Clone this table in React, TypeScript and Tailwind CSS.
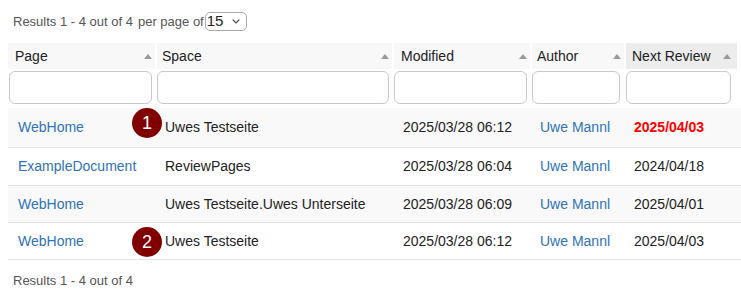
import { ReactNode } from "react";

const cols = [
  { key: "page", label: "Page", w: "w-[147px]", input: "w-[143px] ml-[1px]", pad: "pl-[10px]" },
  { key: "space", label: "Space", w: "w-[235px]", input: "w-[232px]", pad: "pl-[8px]" },
  { key: "modified", label: "Modified", w: "w-[136px]", input: "w-[133px]", pad: "pl-[9px]" },
  { key: "author", label: "Author", w: "w-[92px]", input: "w-[88px]", pad: "pl-[8px]" },
  { key: "review", label: "Next Review", w: "w-[111px]", input: "w-[105px]", pad: "pl-[8px]" },
];

type Row = {
  page: string;
  space: string;
  modified: string;
  author: string;
  review: string;
  overdue?: boolean;
  badge?: string;
  h: string;
  bg: string;
};

const rows: Row[] = [
  { page: "WebHome", space: "Uwes Testseite", modified: "2025/03/28 06:12", author: "Uwe Mannl", review: "2025/04/03", overdue: true, badge: "1", h: "h-[40px]", bg: "bg-[#f9f9f9]" },
  { page: "ExampleDocument", space: "ReviewPages", modified: "2025/03/28 06:04", author: "Uwe Mannl", review: "2024/04/18", h: "h-[38px]", bg: "bg-white" },
  { page: "WebHome", space: "Uwes Testseite.Uwes Unterseite", modified: "2025/03/28 06:09", author: "Uwe Mannl", review: "2025/04/01", h: "h-[37px]", bg: "bg-[#f9f9f9]" },
  { page: "WebHome", space: "Uwes Testseite", modified: "2025/03/28 06:12", author: "Uwe Mannl", review: "2025/04/03", badge: "2", h: "h-[37px]", bg: "bg-white" },
];

function SortArrow() {
  return (
    <svg width="8" height="5" viewBox="0 0 8 5" className="shrink-0">
      <path d="M4 0 L8 5 L0 5 Z" fill="#9a9a9a" />
    </svg>
  );
}

function Badge({ n, top }: { n: string; top: string }) {
  return (
    <span className={`absolute left-[124px] ${top} w-[30px] h-[30px] rounded-full bg-[#800000] text-white text-[18px] leading-none flex items-center justify-center`}>
      {n}
    </span>
  );
}

function Cell({ w, pad, children }: { w: string; pad: string; children: ReactNode }) {
  return <div className={`${w} ${pad} shrink-0 flex items-center`}>{children}</div>;
}

export default function App() {
  return (
    <div className="w-[741px] h-[301px] overflow-hidden bg-white text-[14px] text-[#222] font-['Liberation_Sans',Arial,sans-serif]">
      <div className="pt-[12px] pl-[13px] flex items-center h-[31px] text-[13px] text-[#555]">
        <span>Results 1 - 4 out of 4</span>
        <span className="ml-[5px]">per page of</span>
        <span className="ml-[1px] w-[42px] h-[19px] border border-[#aaa] rounded-[5px] flex items-center pl-[1px] pr-[6px] justify-between text-[15px] text-[#222]">
          15
          <svg width="8" height="5" viewBox="0 0 8 5">
            <path d="M0.7 0.7 L4 4 L7.3 0.7" fill="none" stroke="#444" strokeWidth="1.2" />
          </svg>
        </span>
      </div>

      <div className="mt-[12px] pl-[8px] flex gap-[2px] h-[26px]">
        {cols.map((c, i) => (
          <div
            key={c.key}
            className={`${c.w} shrink-0 flex items-center justify-between ${i === 4 ? "bg-[#ececec] pl-[6px] pr-[6px]" : "bg-[#f8f8f8] pr-[3px]"} ${i === 0 ? "pl-[7px]" : i === 1 ? "pl-[5px]" : i === 2 ? "pl-[7px]" : i === 3 ? "pl-[5px]" : ""}`}
          >
            <span>{c.label}</span>
            <SortArrow />
          </div>
        ))}
      </div>

      <div className="mt-[2px] pl-[8px] flex gap-[2px]">
        {cols.map((c) => (
          <div key={c.key} className={`${c.w} shrink-0`}>
            <input className={`${c.input} block h-[33px] border border-[#c8c8c8] rounded-[6px] bg-white`} />
          </div>
        ))}
      </div>

      <div className="mt-[4px] ml-[8px] w-[740px]">
        {rows.map((r, i) => (
          <div key={i} className={`relative flex ${r.h} ${r.bg} border-b border-[#e3e3e3] gap-[2px]`}>
            {r.badge && <Badge n={r.badge} top={i === 0 ? "top-0" : "top-[4px]"} />}
            <Cell w={cols[0].w} pad={cols[0].pad}>
              <a className="text-[#2f72b8]">{r.page}</a>
            </Cell>
            <Cell w={cols[1].w} pad={cols[1].pad}>
              {r.space}
            </Cell>
            <Cell w={cols[2].w} pad={cols[2].pad}>
              {r.modified}
            </Cell>
            <Cell w={cols[3].w} pad={cols[3].pad}>
              <a className="text-[#2f72b8]">{r.author}</a>
            </Cell>
            <Cell w={cols[4].w} pad={cols[4].pad}>
              <span className={r.overdue ? "text-[#ff0000] font-bold" : ""}>{r.review}</span>
            </Cell>
          </div>
        ))}
      </div>

      <div className="mt-[11px] pl-[13px] text-[13px] text-[#555]">Results 1 - 4 out of 4</div>
    </div>
  );
}
